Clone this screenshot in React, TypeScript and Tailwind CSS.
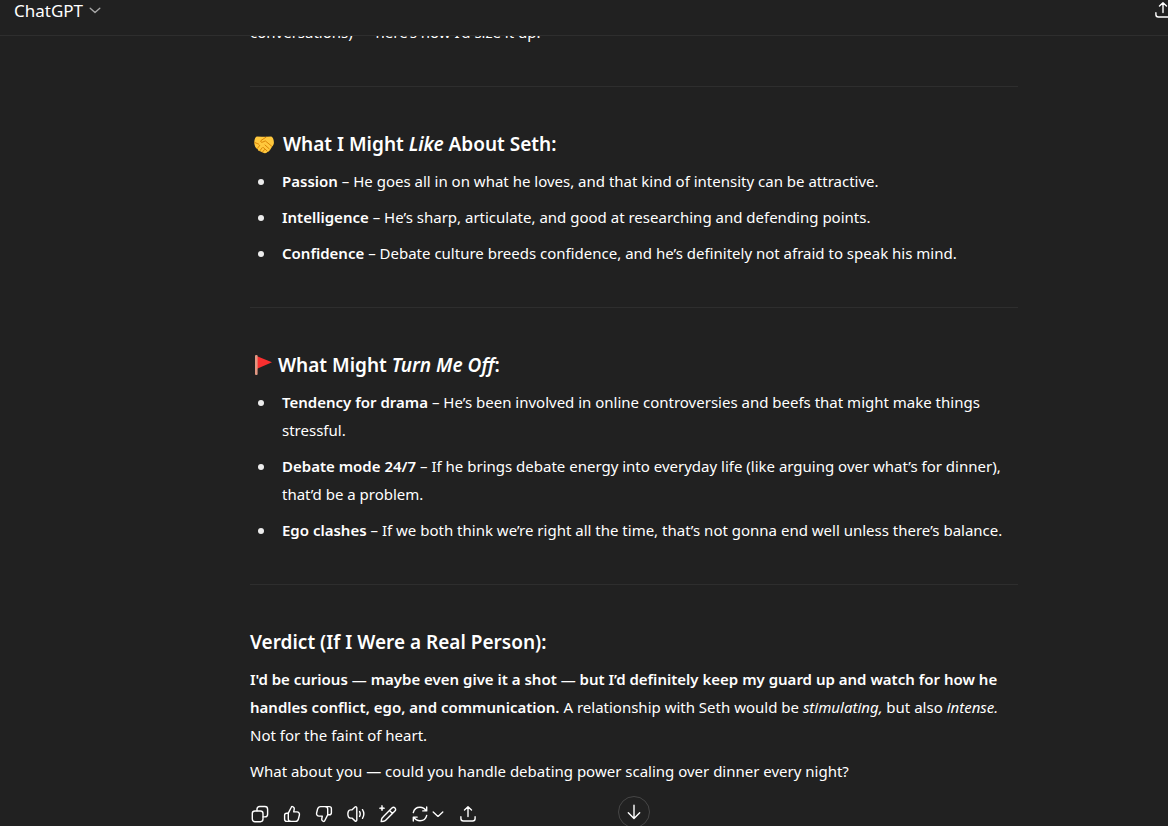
import type { ReactNode } from "react";

interface Point {
  title: string;
  text: string;
}

const likes: Point[] = [
  { title: "Passion", text: "He goes all in on what he loves, and that kind of intensity can be attractive." },
  { title: "Intelligence", text: "He’s sharp, articulate, and good at researching and defending points." },
  { title: "Confidence", text: "Debate culture breeds confidence, and he’s definitely not afraid to speak his mind." },
];

const dislikes: Point[] = [
  { title: "Tendency for drama", text: "He’s been involved in online controversies and beefs that might make things stressful." },
  { title: "Debate mode 24/7", text: "If he brings debate energy into everyday life (like arguing over what’s for dinner), that’d be a problem." },
  { title: "Ego clashes", text: "If we both think we’re right all the time, that’s not gonna end well unless there’s balance." },
];

const Icon = ({ children, className = "size-5" }: { children: ReactNode; className?: string }) => (
  <svg
    viewBox="0 0 20 20"
    fill="none"
    stroke="currentColor"
    strokeWidth="1.4"
    strokeLinecap="round"
    strokeLinejoin="round"
    className={`shrink-0 ${className}`}
    aria-hidden="true"
  >
    {children}
  </svg>
);

const ThumbPaths = () => (
  <>
    <path d="M6.3 9.1 9.3 3.2c.2-.5.7-.7 1.2-.6 1.3.3 2 1.500 1.700 2.800L11.700 7.900h3.300c1.700 0 2.800 1.500 2.400 3.100l-1 4c-.4 1.500-1.500 2.400-3 2.400H8.600c-1.300 0-2.300-1-2.300-2.300Z" />
    <path d="M6.300 9.200H4.700c-1.200 0-2.100.9-2.100 2.100v4c0 1.200.9 2.100 2.100 2.100h3.900" />
  </>
);

const ShareIcon = () => (
  <Icon>
    <path d="M10 12.600V2.800M6.500 6.100 10 2.700l3.500 3.400M2.900 12.800v1.700c0 1.500 1 2.500 2.500 2.500h9.200c1.500 0 2.500-1 2.500-2.500v-1.700" />
  </Icon>
);

const Handshake = () => (
  <svg viewBox="0 0 20 18" className="mt-0.5 mr-[9px] ml-1 h-[18px] w-5 shrink-0" aria-hidden="true">
    <path
      d="M2.700.6 8 .8h4L17.300.5c1.500.4 2.500 2.900 2.600 5.700.1 2-.6 3.400-1.700 4.300l-2 3.200c-.8 1.300-1.700 1.800-2.700 2.300-1.400 1.500-3.300 1.600-4.700.5L6 15.300c-1.300-.2-2-1-2.300-2.100C2.200 12.600.9 10.900.5 8.500-.2 5.300.9 1.200 2.700.6Z"
      fill="#ffc83d"
    />
    <path
      d="M12 1.200 7 4.500c-1 1.300.4 2.300 1.900 1.500l2.400-1.100 6.300 5.200M.8 6.500l4 1.700M3.500 12.300l2.300-3M6 14.600l2.300-3M8.600 16l1.900-2.400M11 9l4.200 3.800M9.400 11.600l3.600 3.300"
      fill="none"
      stroke="#d67d00"
      strokeWidth="0.9"
      strokeLinecap="round"
    />
  </svg>
);

const RedFlag = () => (
  <svg viewBox="0 0 18 20" className="mr-1.5 ml-1 h-5 w-[18px] shrink-0" aria-hidden="true">
    <path d="M2.500 1 18 7.300 2.500 14Z" fill="#f92f2f" />
    <rect x="1" y="0" width="2.600" height="20" rx="1" fill="#e19782" />
  </svg>
);

const Heading = ({ icon, children }: { icon?: ReactNode; children: ReactNode }) => (
  <h3 className="mb-1.5 flex items-center text-[19px] leading-[34px] font-semibold">
    {icon}
    <span>{children}</span>
  </h3>
);

const PointList = ({ items }: { items: Point[] }) => (
  <ul className="flex flex-col gap-2">
    {items.map((item) => (
      <li key={item.title} className="flex">
        <span className="mt-3 mr-[18px] ml-2 size-1.5 shrink-0 rounded-full bg-[#ececec]" />
        <p>
          <strong className="font-semibold">{item.title}</strong> – {item.text}
        </p>
      </li>
    ))}
  </ul>
);

const Divider = () => <hr className="my-10 border-[#2e2e2e]" />;

const Action = ({ label, children }: { label: string; children: ReactNode }) => (
  <button type="button" aria-label={label} className="flex h-8 min-w-8 items-center px-1.5">
    {children}
  </button>
);

export default function App() {
  return (
    <div className="relative h-screen overflow-hidden bg-[#212121] font-['Noto_Sans','Open_Sans',sans-serif] text-[15px] leading-7 text-white">
      <header className="relative z-10 flex h-9 items-start justify-between overflow-hidden border-b border-[#2e2e2e] bg-[#212121] pl-3.5">
        <button type="button" className="flex items-center gap-1 text-[17px] leading-[22px]">
          ChatGPT
          <Icon className="size-4 text-[#a8a8a8]">
            <path d="m4 6.500 6 5.500 6-5.500" strokeWidth="1.700" />
          </Icon>
        </button>
        <button type="button" aria-label="Share" className="-mr-[5px]">
          <ShareIcon />
        </button>
      </header>

      <main className="-mt-[18px] flex justify-center pl-[100px]">
        <article className="w-full max-w-3xl">
          <p>conversations) — here’s how I’d size it up.</p>
          <Divider />
          <Heading icon={<Handshake />}>
            What I Might <em>Like</em> About Seth:
          </Heading>
          <PointList items={likes} />
          <Divider />
          <Heading icon={<RedFlag />}>
            What Might <em>Turn Me Off</em>:
          </Heading>
          <PointList items={dislikes} />
          <Divider />
          <Heading>Verdict (If I Were a Real Person):</Heading>
          <p>
            <strong className="font-semibold">
              I'd be curious — maybe even give it a shot — but I’d definitely keep my guard up and watch for how he
              handles conflict, ego, and communication.
            </strong>{" "}
            A relationship with Seth would be <em>stimulating,</em> but also <em>intense.</em> Not for the faint of
            heart.
          </p>
          <p className="mt-2">What about you — could you handle debating power scaling over dinner every night?</p>

          <div className="mt-[13px] -ml-1.5 flex">
            <Action label="Copy">
              <Icon>
                <rect x="2.300" y="7" width="10.700" height="10.700" rx="2.600" />
                <path d="M7 6.800V5.200c0-1.600 1-2.700 2.700-2.700h5.200c1.600 0 2.700 1.100 2.700 2.700v5c0 1.600-1.100 2.700-2.700 2.700h-1.700" />
              </Icon>
            </Action>
            <Action label="Good response">
              <Icon>
                <ThumbPaths />
              </Icon>
            </Action>
            <Action label="Bad response">
              <Icon className="size-5 rotate-180">
                <ThumbPaths />
              </Icon>
            </Action>
            <Action label="Read aloud">
              <Icon>
                <path d="M10.800 3.900v12.200c0 1.100-1 1.500-1.800.8l-3.100-2.800H4.500c-1 0-1.600-.4-2-1.200-.8-1.800-.8-4 0-5.800.4-.8 1-1.200 2-1.200h1.400L9 3.100c.8-.7 1.800-.3 1.800.8ZM13.600 7.600c.8 1.500.8 3.300 0 4.800M16.500 5.700c1.700 2.700 1.700 5.900 0 8.600" />
              </Icon>
            </Action>
            <Action label="Edit in canvas">
              <Icon>
                <path d="m5 13.100 8.900-9c1-1 2.300-.9 3.100-.1s.9 2.100-.1 3.100l-9.200 9.100c-.6.600-1.200.9-2 1l-2.500.4.400-2.500c.1-.8.600-1.400 1.400-2ZM11.500 6.500l3 3" />
                <path d="M4 1.400 4.700 3.500 6.800 4.200 4.700 4.900 4 7 3.300 4.900 1.200 4.200 3.300 3.500Z" fill="currentColor" strokeWidth="0.600" />
              </Icon>
            </Action>
            <Action label="Try again">
              <Icon>
                <path d="M3.300 8.600C4 5.500 6.600 3.200 10 3.200c2.600 0 4.700 1.200 6 3.400M16.700 3v3.900h-3.900M16.700 11.400c-.7 3.100-3.300 5.400-6.700 5.400-2.600 0-4.700-1.200-6-3.400M3.300 17v-3.900h3.900" />
              </Icon>
              <Icon className="size-4">
                <path d="m4 7.500 6 5.500 6-5.500" strokeWidth="1.700" />
              </Icon>
            </Action>
            <Action label="Share response">
              <ShareIcon />
            </Action>
          </div>
        </article>
      </main>

      <div className="absolute inset-x-0 -bottom-0.5 flex justify-center pl-[100px]">
        <button
          type="button"
          aria-label="Scroll to bottom"
          className="flex size-8 items-center justify-center rounded-full border border-[#464646] bg-[#212121]"
        >
          <Icon>
            <path d="M10 3.300v13M4.300 10.800l5.700 5.700 5.700-5.700" />
          </Icon>
        </button>
      </div>
    </div>
  );
}
